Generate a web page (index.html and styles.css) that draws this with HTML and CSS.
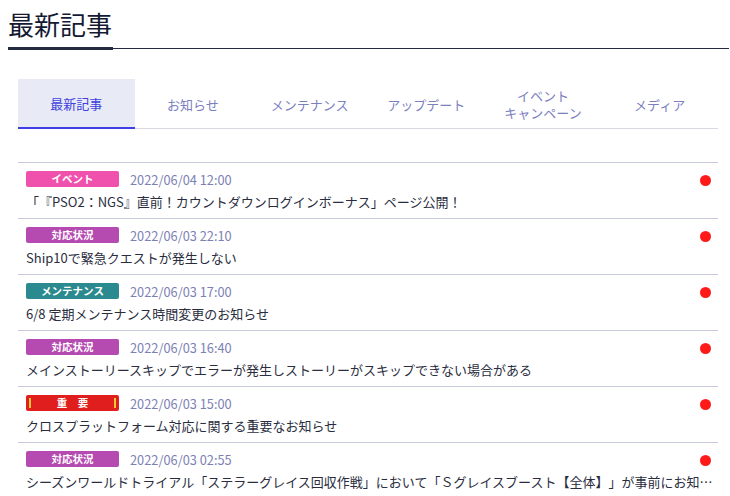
FILE: index.html
```html
<!DOCTYPE html>
<html lang="ja">
<head>
<meta charset="utf-8">
<title>最新記事</title>
<link rel="stylesheet" href="styles.css">
</head>
<body>
<div class="page">
  <div class="header"><h1 class="title">最新記事</h1></div>
  <div class="content">
    <nav class="tabs">
      <div class="tab active">最新記事</div>
      <div class="tab">お知らせ</div>
      <div class="tab">メンテナンス</div>
      <div class="tab">アップデート</div>
      <div class="tab">イベント<br>キャンペーン</div>
      <div class="tab">メディア</div>
    </nav>
    <ul class="list">
      <li class="item">
        <div class="meta"><span class="badge b-event">イベント</span><span class="date">2022/06/04 12:00</span><span class="dot"></span></div>
        <div class="text">「『PSO2：NGS』直前！カウントダウンログインボーナス」ページ公開！</div>
      </li>
      <li class="item">
        <div class="meta"><span class="badge b-status">対応状況</span><span class="date">2022/06/03 22:10</span><span class="dot"></span></div>
        <div class="text">Ship10で緊急クエストが発生しない</div>
      </li>
      <li class="item">
        <div class="meta"><span class="badge b-maint">メンテナンス</span><span class="date">2022/06/03 17:00</span><span class="dot"></span></div>
        <div class="text">6/8 定期メンテナンス時間変更のお知らせ</div>
      </li>
      <li class="item">
        <div class="meta"><span class="badge b-status">対応状況</span><span class="date">2022/06/03 16:40</span><span class="dot"></span></div>
        <div class="text">メインストーリースキップでエラーが発生しストーリーがスキップできない場合がある</div>
      </li>
      <li class="item">
        <div class="meta"><span class="badge b-important">重　要</span><span class="date">2022/06/03 15:00</span><span class="dot"></span></div>
        <div class="text">クロスプラットフォーム対応に関する重要なお知らせ</div>
      </li>
      <li class="item">
        <div class="meta"><span class="badge b-status">対応状況</span><span class="date">2022/06/03 02:55</span><span class="dot"></span></div>
        <div class="text">シーズンワールドトライアル「ステラーグレイス回収作戦」において「Ｓグレイスブースト【全体】」が事前にお知らせしていた内容と異なる</div>
      </li>
    </ul>
  </div>
</div>
</body>
</html>
```
FILE: styles.css
```css
* { box-sizing: border-box; }
html, body { margin: 0; padding: 0; background: #fff; }
body {
  font-family: "Noto Sans CJK JP", "Noto Sans", sans-serif;
  color: #2a2d3e;
  text-spacing-trim: space-all;
}
.page { padding-left: 8px; }
.header {
  border-bottom: 1px solid #222b40;
  margin-right: 1px;
  height: 49px;
}
.title {
  display: inline-block;
  margin: 0;
  padding: 4px 1px 3px 0;
  font-size: 26px;
  font-weight: 400;
  line-height: 40px;
  height: 50px;
  color: #141a33;
  border-bottom: 3px solid #222b40;
}
.content { margin: 30px 12px 0 10px; }
.tabs {
  display: grid;
  grid-template-columns: repeat(6, 1fr);
  border-bottom: 1px solid #d6d9e4;
  height: 50px;
}
.tab {
  display: flex;
  align-items: center;
  justify-content: center;
  text-align: center;
  font-size: 13px;
  line-height: 17px;
  color: #7b80bf;
  padding-top: 1px;
}
.tab.active {
  background: #e8ebf5;
  color: #4040e0;
  border-bottom: 2px solid #3e3ee6;
  margin-bottom: -1px;
}
.list {
  list-style: none;
  margin: 33px 0 0 0;
  padding: 0;
  border-top: 1px solid #c8cbd9;
}
.item {
  border-bottom: 1px solid #c8cbd9;
  padding: 8px 0 0 8px;
  height: 56px;
}
.meta {
  display: flex;
  align-items: center;
  height: 16px;
}
.badge {
  width: 93px;
  height: 16px;
  border-radius: 2px;
  color: #fff;
  font-size: 10.5px;
  font-weight: 700;
  line-height: 16px;
  text-align: center;
  position: relative;
}
.b-event { background: #f051ad; }
.b-status { background: #b54bb1; }
.b-maint { background: #2b8a8f; }
.b-important { background: #e01e1e; }
.b-important::before, .b-important::after {
  content: "";
  position: absolute;
  top: 3px;
  width: 2px;
  height: 10px;
  background: #ecc834;
}
.b-important::before { left: 3px; }
.b-important::after { right: 3px; }
.date {
  margin-left: 11px;
  font-size: 12.8px;
  color: #7c81b4;
  flex: 1;
}
.dot {
  width: 11px;
  height: 11px;
  border-radius: 50%;
  background: #ff1a1a;
  margin-right: 7px;
  margin-top: 2px;
}
.text {
  margin-top: 6px;
  font-size: 13px;
  line-height: 18px;
  white-space: nowrap;
  overflow: hidden;
  text-overflow: ellipsis;
  padding-right: 4px;
}
```
